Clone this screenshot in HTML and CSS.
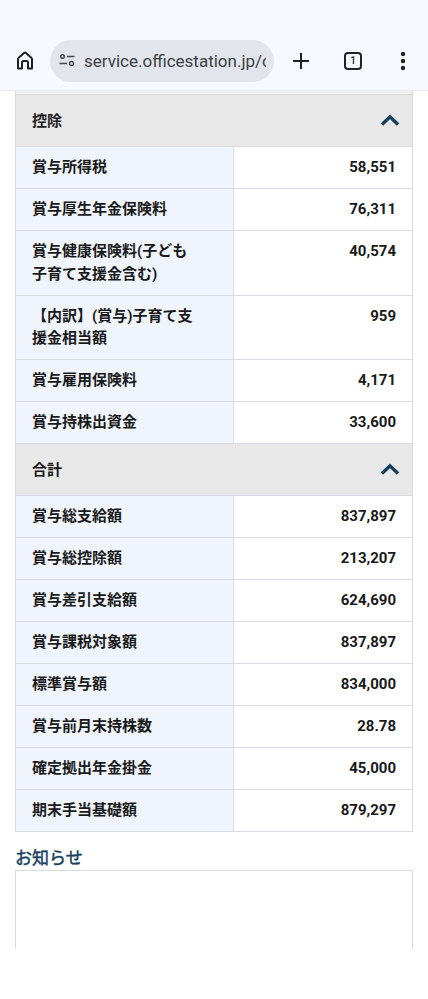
FILE: index.html
```html
<!DOCTYPE html>
<html lang="ja">
<head>
<meta charset="utf-8">
<title>賞与明細</title>
<link rel="stylesheet" href="styles.css">
</head>
<body>
<header class="browser">
  <div class="toolbar">
    <svg class="home" viewBox="0 0 24 24" width="24" height="24"><path d="M5 19.500V10Q5 9.200 5.700 8.700L11 4Q12 3.200 13 4L18.300 8.700Q19 9.200 19 10V19.500H15V13.500Q15 12 13.500 12H10.500Q9 12 9 13.500V19.500Z" fill="none" stroke="#1f2125" stroke-width="2" stroke-linejoin="round"/></svg>
    <div class="url">
      <svg class="tune" viewBox="0 0 18 14" width="18" height="14"><circle cx="3.500" cy="2.500" r="1.800" fill="none" stroke="#44474a" stroke-width="1.400"/><path d="M8 2.500H15.500M0.500 9.500H8" stroke="#44474a" stroke-width="1.400" fill="none"/><circle cx="12.500" cy="9.500" r="2" fill="none" stroke="#44474a" stroke-width="1.400"/></svg>
      <span class="url-text">service.officestation.jp/c</span>
    </div>
    <svg class="plus" viewBox="0 0 20 20" width="20" height="20"><path d="M10 2V18M2 10H18" stroke="#1f2125" stroke-width="2"/></svg>
    <div class="tabs">1</div>
    <svg class="more" viewBox="0 0 6 20" width="6" height="20"><circle cx="3" cy="3" r="2.200" fill="#1f2125"/><circle cx="3" cy="10" r="2.200" fill="#1f2125"/><circle cx="3" cy="17" r="2.200" fill="#1f2125"/></svg>
  </div>
</header>
<main class="content">
  <section class="table">
    <div class="table-top"></div>
    <div class="section-head"><span>控除</span><svg class="chev" viewBox="0 0 20 12" width="20" height="12"><path d="M2 10.500L10 2.800 18 10.500" fill="none" stroke="#17405f" stroke-width="3.400"/></svg></div>
    <div class="row"><div class="label">賞与所得税</div><div class="value">58,551</div></div>
    <div class="row"><div class="label">賞与厚生年金保険料</div><div class="value">76,311</div></div>
    <div class="row"><div class="label">賞与健康保険料(子ども子育て支援金含む)</div><div class="value">40,574</div></div>
    <div class="row"><div class="label">【内訳】(賞与)子育て支援金相当額</div><div class="value">959</div></div>
    <div class="row"><div class="label">賞与雇用保険料</div><div class="value">4,171</div></div>
    <div class="row"><div class="label">賞与持株出資金</div><div class="value">33,600</div></div>
    <div class="section-head"><span>合計</span><svg class="chev" viewBox="0 0 20 12" width="20" height="12"><path d="M2 10.500L10 2.800 18 10.500" fill="none" stroke="#17405f" stroke-width="3.400"/></svg></div>
    <div class="row"><div class="label">賞与総支給額</div><div class="value">837,897</div></div>
    <div class="row"><div class="label">賞与総控除額</div><div class="value">213,207</div></div>
    <div class="row"><div class="label">賞与差引支給額</div><div class="value">624,690</div></div>
    <div class="row"><div class="label">賞与課税対象額</div><div class="value">837,897</div></div>
    <div class="row"><div class="label">標準賞与額</div><div class="value">834,000</div></div>
    <div class="row"><div class="label">賞与前月末持株数</div><div class="value">28.78</div></div>
    <div class="row"><div class="label">確定拠出年金掛金</div><div class="value">45,000</div></div>
    <div class="row"><div class="label">期末手当基礎額</div><div class="value">879,297</div></div>
  </section>
  <h2 class="notice-title">お知らせ</h2>
  <div class="notice-box"></div>
</main>
</body>
</html>
```
FILE: styles.css
```css
* { box-sizing: border-box; }
html, body { margin: 0; padding: 0; background: #fff; }
body {
  width: 428px;
  height: 999px;
  overflow: hidden;
  font-family: Roboto, "Noto Sans CJK JP", sans-serif;
  color: #1a1a1a;
}
.browser {
  height: 91px;
  background: #f6f9ff;
  border-bottom: 1px solid #e8eaee;
  padding-top: 40px;
}
.toolbar {
  display: flex;
  align-items: center;
  height: 42px;
  padding-left: 13px;
}
.url {
  width: 224px;
  height: 42px;
  margin-left: 13px;
  border-radius: 21px;
  background: #e2e6ec;
  display: flex;
  align-items: center;
  padding-left: 9px;
  overflow: hidden;
}
.tune { flex: none; }
.url-text {
  margin-left: 7px;
  width: 182px;
  overflow: hidden;
  white-space: nowrap;
  font: 17px Roboto, sans-serif;
  color: #3d4043;
}
.plus { margin-left: 17px; }
.tabs {
  margin-left: 33px;
  width: 18px;
  height: 18px;
  border: 2px solid #1f2125;
  border-radius: 4px;
  font: 500 10px/14px Roboto, sans-serif;
  text-align: center;
  color: #1f2125;
}
.more { margin-left: 38px; }
.content {
  height: 858px;
  overflow: hidden;
  padding: 0 15px;
}
.table {
  border: 1px solid #d9dbe0;
  border-top: 0;
}
.table-top {
  height: 4px;
  background: #f0f0f0;
  border-bottom: 1px solid #d9dbe0;
}
.section-head {
  height: 52px;
  background: #e8e8e8;
  display: flex;
  align-items: center;
  justify-content: space-between;
  padding: 0 12px 2px 16px;
  font-size: 15px;
  font-weight: 700;
  border-bottom: 1px solid #d9dbe0;
}
.row {
  display: flex;
  border-bottom: 1px solid #d9dbe0;
  font-size: 15px;
  font-weight: 700;
  line-height: 22.5px;
}
.row:last-child { border-bottom: 0; }
.label {
  width: 218px;
  flex: none;
  background: #eff4fd;
  border-right: 1px solid #d9dbe0;
  padding: 9px 36px 9.5px 16px;
}
.value {
  flex: 1;
  text-align: right;
  padding: 9px 16px 9.5px;
}
.notice-title {
  margin: 15px 0 0;
  font-size: 17px;
  line-height: 22px;
  font-weight: 400;
  color: #17405f;
  -webkit-text-stroke: 0.45px #17405f;
}
.notice-box {
  height: 120px;
  border: 1px solid #d9dbe0;
  margin-top: 1px;
}
```
